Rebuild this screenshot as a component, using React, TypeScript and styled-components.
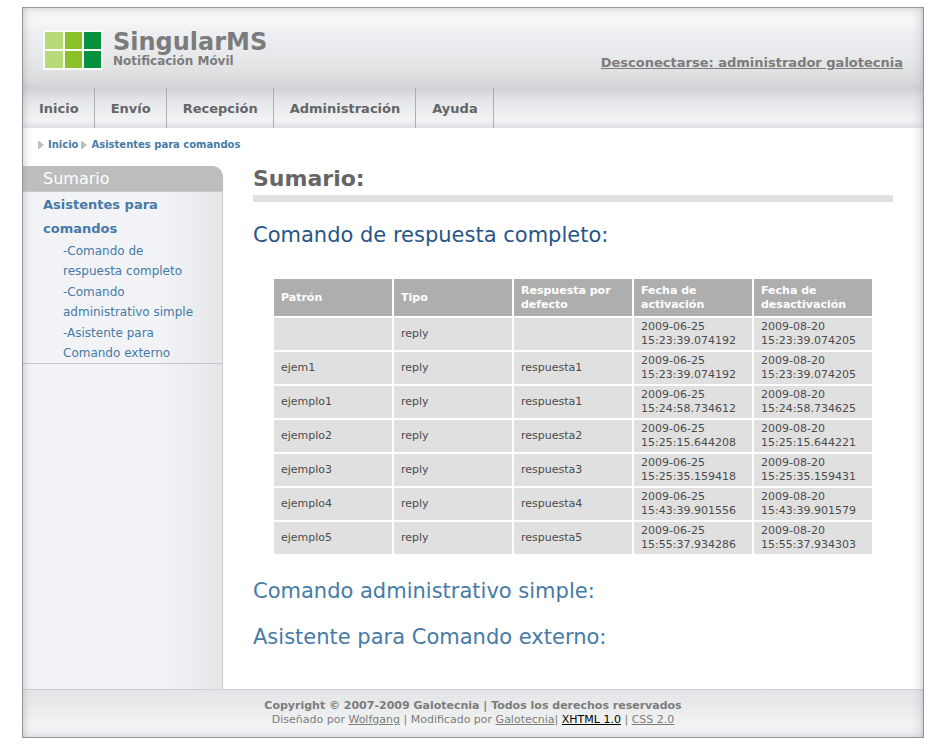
import React from 'react';
import styled, { createGlobalStyle } from 'styled-components';

const GlobalStyle = createGlobalStyle`
  *, *::before, *::after { box-sizing: border-box; }
  body {
    margin: 0;
    background: #fff;
    color: #4c4c4c;
    font-family: "DejaVu Sans", Verdana, sans-serif;
    font-size: 11px;
    line-height: 14px;
  }
  h1, h2, h3, p, ul, ol { margin: 0; padding: 0; }
  ul, ol { list-style: none; }
`;

const Page = styled.div`
  padding: 7px 21px 10px 22px;
`;

const Frame = styled.div`
  position: relative;
  border: 1px solid #959595;

  &::after {
    content: "";
    position: absolute;
    inset: 0;
    pointer-events: none;
    background:
      linear-gradient(to right, rgba(150, 150, 165, 0.28), rgba(190, 195, 210, 0.12) 5px, transparent 10px),
      linear-gradient(to left, rgba(150, 150, 165, 0.34), rgba(180, 180, 190, 0.18) 4px, transparent 11px);
  }
`;

const Header = styled.header`
  display: flex;
  align-items: flex-start;
  justify-content: space-between;
  height: 80px;
  padding: 22px 20px 0;
  background: linear-gradient(
    #dededf 0,
    #eff0f0 4px,
    #f5f8f6 10px,
    #eff0f3 24px,
    #e6e7e9 52px,
    #dedfe1 68px,
    #d6d7da 76px,
    #d0d1d5 80px
  );
`;

const Brand = styled.div`
  display: flex;
  gap: 10px;
`;

const BrandText = styled.div`
  display: flex;
  flex-direction: column;
  color: #7c7c7c;
  font-weight: bold;
`;

const SiteName = styled.h1`
  font-size: 24px;
  line-height: 25px;
`;

const Tagline = styled.span`
  font-size: 12px;
  line-height: 12px;
`;

const Logout = styled.a`
  margin-top: 25px;
  color: #7c7c7c;
  font-size: 13px;
  font-weight: bold;
  line-height: 16px;
`;

const NavList = styled.ul`
  display: flex;
  height: 40px;
  background: linear-gradient(#d0d1d5 0, #d8d9dd 5px, #e3e4e8 11px, #ebecee 22px, #f2f3f5 33px, #e4e5e9 38px, #dcdde1 40px);
`;

const NavItem = styled.li`
  border-right: 1px solid #aeaeae;
`;

const NavLink = styled.a`
  display: block;
  padding: 1px 15px 0 16px;
  color: #656565;
  font-size: 13px;
  font-weight: bold;
  line-height: 39px;
  text-decoration: none;
`;

const Crumbs = styled.ol`
  display: flex;
  gap: 2px;
  height: 38px;
  padding: 10px 15px 0;
`;

const Crumb = styled.li<{ $gap: number }>`
  display: flex;
  align-items: center;
  gap: ${(p) => p.$gap}px;
  height: 14px;
`;

const CrumbLink = styled.a`
  color: #467aa7;
  font-size: 10px;
  font-weight: bold;
  text-decoration: none;
`;

const Columns = styled.div`
  display: flex;
  min-height: 523px;
`;

const Sidebar = styled.aside`
  flex: 0 0 201px;
  border-right: 1px solid #fafcfc;
  background: linear-gradient(to right, #f2f3f6 0, #f2f3f6 138px, #e6e7e9 199px, #cdced1 199px, #cdced1 200px);
`;

const SideHead = styled.div`
  background: #fff;
`;

const SideTitle = styled.h2`
  height: 26px;
  padding-left: 20px;
  border-bottom: 1px solid #c8c9cb;
  border-top-right-radius: 11px;
  background: #bdbdbd;
  color: #fff;
  font-size: 16px;
  font-weight: normal;
  line-height: 26px;
`;

const SideMenu = styled.nav`
  margin-right: 1px;
  padding: 1px 20px 0;
  border-bottom: 1px solid #c4c5c8;
`;

const SideMain = styled.a`
  display: block;
  color: #467aa7;
  font-size: 13px;
  font-weight: bold;
  line-height: 24px;
  text-decoration: none;
`;

const SideSub = styled.ul`
  padding-left: 20px;
`;

const SideItem = styled.li`
  & + & {
    padding-top: 1px;
  }
`;

const SideLink = styled.a`
  display: block;
  color: #467aa7;
  font-size: 12px;
  line-height: 20px;
  text-decoration: none;
`;

const Content = styled.main`
  flex: 1;
  min-width: 0;
  padding: 0 30px 28px 29px;
`;

const Title = styled.h2`
  height: 36px;
  border-bottom: 7px solid #e0e0e0;
  color: #656565;
  font-size: 22px;
  line-height: 26px;
`;

const SectionTitle = styled.h3`
  margin-top: 20px;
  font-size: 21px;
  font-weight: normal;
  line-height: 26px;
`;

const SectionLink = styled.a<{ $active?: boolean }>`
  color: ${(p) => (p.$active ? '#275587' : '#467aa7')};
  text-decoration: none;
`;

const DataTable = styled.table`
  width: calc(100% - 38px);
  margin: 29px 19px 22px;
  border-collapse: separate;
  border-spacing: 2px;
  table-layout: fixed;
`;

const HeadCell = styled.th`
  height: 37px;
  padding: 4px 7px;
  background: #aeaeae;
  color: #fff;
  font-weight: bold;
  text-align: left;
`;

const Cell = styled.td`
  height: 32px;
  padding: 2px 7px;
  background: #e0e0e0;
`;

const Footer = styled.footer`
  height: 48px;
  padding-top: 9px;
  border-top: 1px solid #d0d0d2;
  background: linear-gradient(#e4e5e8, #e8e9eb 14px, #f2f4f3 36px, #eeeff2 42px, #dfe0e3);
  color: #7c7c7c;
  text-align: center;
`;

const FooterLink = styled.a<{ $strong?: boolean }>`
  color: ${(p) => (p.$strong ? '#000' : '#7c7c7c')};
`;

const Logo = () => (
  <svg width="60" height="40" viewBox="0 0 60 40" role="img" aria-label="SingularMS">
    <rect width="60" height="40" fill="#fafcf8" />
    <rect x="2" y="2" width="18" height="17" fill="#b8db7a" />
    <rect x="22" y="2" width="17" height="17" fill="#88c227" />
    <rect x="41" y="2" width="17" height="17" fill="#05923f" />
    <rect x="2" y="21" width="18" height="17" fill="#b8db7a" />
    <rect x="22" y="21" width="17" height="17" fill="#88c227" />
    <rect x="41" y="21" width="17" height="17" fill="#05923f" />
  </svg>
);

const Arrow = () => (
  <svg width="6" height="8" viewBox="0 0 6 8" aria-hidden="true">
    <path d="M0 0h1l5 4-5 4H0z" fill="#bdbdbd" />
  </svg>
);

const navItems = ['Inicio', 'Envío', 'Recepción', 'Administración', 'Ayuda'];
const sideItems = ['-Comando de respuesta completo', '-Comando administrativo simple', '-Asistente para Comando externo'];
const columns = ['Patrón', 'Tipo', 'Respuesta por defecto', 'Fecha de activación', 'Fecha de desactivación'];
const rows = [
  ['', 'reply', '', '2009-06-25 15:23:39.074192', '2009-08-20 15:23:39.074205'],
  ['ejem1', 'reply', 'respuesta1', '2009-06-25 15:23:39.074192', '2009-08-20 15:23:39.074205'],
  ['ejemplo1', 'reply', 'respuesta1', '2009-06-25 15:24:58.734612', '2009-08-20 15:24:58.734625'],
  ['ejemplo2', 'reply', 'respuesta2', '2009-06-25 15:25:15.644208', '2009-08-20 15:25:15.644221'],
  ['ejemplo3', 'reply', 'respuesta3', '2009-06-25 15:25:35.159418', '2009-08-20 15:25:35.159431'],
  ['ejemplo4', 'reply', 'respuesta4', '2009-06-25 15:43:39.901556', '2009-08-20 15:43:39.901579'],
  ['ejemplo5', 'reply', 'respuesta5', '2009-06-25 15:55:37.934286', '2009-08-20 15:55:37.934303'],
];

export default function App() {
  return (
    <>
      <GlobalStyle />
      <Page>
        <Frame>
          <Header>
            <Brand>
              <Logo />
              <BrandText>
                <SiteName>SingularMS</SiteName>
                <Tagline>Notificación Móvil</Tagline>
              </BrandText>
            </Brand>
            <Logout href="#logout">Desconectarse: administrador galotecnia</Logout>
          </Header>
          <nav>
            <NavList>
              {navItems.map((item) => (
                <NavItem key={item}>
                  <NavLink href="#">{item}</NavLink>
                </NavItem>
              ))}
            </NavList>
          </nav>
          <Crumbs>
            <Crumb $gap={4}>
              <Arrow />
              <CrumbLink href="#">Inicio</CrumbLink>
            </Crumb>
            <Crumb $gap={5}>
              <Arrow />
              <CrumbLink href="#">Asistentes para comandos</CrumbLink>
            </Crumb>
          </Crumbs>
          <Columns>
            <Sidebar>
              <SideHead>
                <SideTitle>Sumario</SideTitle>
              </SideHead>
              <SideMenu>
                <SideMain href="#">Asistentes para comandos</SideMain>
                <SideSub>
                  {sideItems.map((item) => (
                    <SideItem key={item}>
                      <SideLink href="#">{item}</SideLink>
                    </SideItem>
                  ))}
                </SideSub>
              </SideMenu>
            </Sidebar>
            <Content>
              <Title>Sumario:</Title>
              <SectionTitle>
                <SectionLink href="#" $active>Comando de respuesta completo:</SectionLink>
              </SectionTitle>
              <DataTable>
                <thead>
                  <tr>
                    {columns.map((name) => (
                      <HeadCell key={name} scope="col">{name}</HeadCell>
                    ))}
                  </tr>
                </thead>
                <tbody>
                  {rows.map((row, i) => (
                    <tr key={i}>
                      {row.map((value, j) => (
                        <Cell key={j}>{value}</Cell>
                      ))}
                    </tr>
                  ))}
                </tbody>
              </DataTable>
              <SectionTitle>
                <SectionLink href="#">Comando administrativo simple:</SectionLink>
              </SectionTitle>
              <SectionTitle>
                <SectionLink href="#">Asistente para Comando externo:</SectionLink>
              </SectionTitle>
            </Content>
          </Columns>
          <Footer>
            <p><strong>Copyright © 2007-2009 Galotecnia | Todos los derechos reservados</strong></p>
            <p>
              Diseñado por <FooterLink href="#">Wolfgang</FooterLink> | Modificado por{' '}
              <FooterLink href="#">Galotecnia</FooterLink>|{' '}
              <FooterLink href="#" $strong>XHTML 1.0</FooterLink> | <FooterLink href="#">CSS 2.0</FooterLink>
            </p>
          </Footer>
        </Frame>
      </Page>
    </>
  );
}
